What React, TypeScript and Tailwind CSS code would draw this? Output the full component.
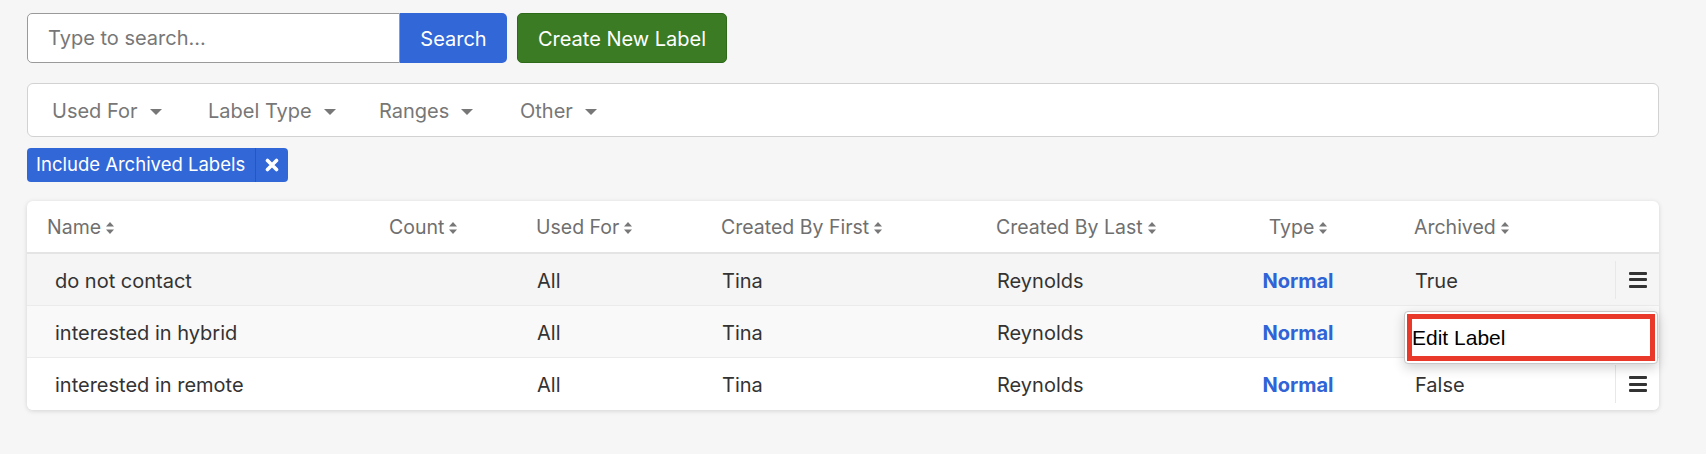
type Row = {
  name: string;
  usedFor: string;
  first: string;
  last: string;
  type: string;
  archived: string;
  bg: string;
};

const rows: Row[] = [
  { name: "do not contact", usedFor: "All", first: "Tina", last: "Reynolds", type: "Normal", archived: "True", bg: "bg-[#f5f5f5]" },
  { name: "interested in hybrid", usedFor: "All", first: "Tina", last: "Reynolds", type: "Normal", archived: "False", bg: "bg-[#f9f9f9]" },
  { name: "interested in remote", usedFor: "All", first: "Tina", last: "Reynolds", type: "Normal", archived: "False", bg: "bg-white" },
];

const cols = "grid grid-cols-[362px_147px_185px_275px_232px_140px_247px_44px]";

export default function App() {
  return (
    <div className="min-h-[454px] bg-[#f6f6f6] pl-[27px] pr-[47px] pt-[13px] font-['Inter',sans-serif] text-[20px] text-[#333]">
      {/* Search + create */}
      <div className="flex items-center gap-[10px]">
        <div className="flex h-[50px]">
          <input
            type="text"
            placeholder="Type to search..."
            className="h-full w-[373px] rounded-l-[5px] border border-[#9a9a9a] bg-white pl-[20px] text-[20px] text-[#333] placeholder:text-[#777] focus:outline-none"
          />
          <button className="h-full w-[107px] rounded-r-[5px] bg-[#3267d7] pt-[1px] text-white">
            Search
          </button>
        </div>
        <button className="h-[50px] w-[210px] rounded-[5px] border border-[#2f6a1a] bg-[#3a7b23] pt-[1px] text-white">
          Create New Label
        </button>
      </div>

      {/* Filter bar */}
      <div className="mt-[20px] flex h-[54px] items-center rounded-[6px] border border-[#d2d2d2] bg-white pl-[24px] pt-[1px] text-[#777]">
        <FilterItem label="Used For" className="w-[156px]" />
        <FilterItem label="Label Type" className="w-[171px]" />
        <FilterItem label="Ranges" className="w-[141px]" />
        <FilterItem label="Other" />
      </div>

      {/* Active filter tag */}
      <div className="mt-[11px] flex h-[34px] w-[261px] items-stretch rounded-[4px] bg-[#3267d7] text-[18.5px] text-white">
        <span className="flex flex-1 items-center pl-[9px]">Include Archived Labels</span>
        <span className="flex w-[33px] items-center justify-center border-l border-[#2a56b5]">
          <svg width="14" height="14" viewBox="0 0 14 14">
            <path d="M2.5 2.5l9 9M11.5 2.5l-9 9" stroke="white" strokeWidth="3.6" strokeLinecap="round" />
          </svg>
        </span>
      </div>

      {/* Table */}
      <div className="relative mt-[19px] w-[1632px] rounded-[6px] bg-white shadow-[0_1px_5px_rgba(0,0,0,0.14)]">
        <div className={`${cols} h-[53px] items-center border-b-2 border-[#e4e4e4] pt-[3px] text-[19.5px] text-[#6f6f6f]`}>
          <HeaderCell label="Name" className="pl-[20px]" />
          <HeaderCell label="Count" />
          <HeaderCell label="Used For" />
          <HeaderCell label="Created By First" />
          <HeaderCell label="Created By Last" />
          <HeaderCell label="Type" className="justify-center" />
          <HeaderCell label="Archived" className="pl-[46px]" />
          <div />
        </div>
        {rows.map((r, i) => (
          <div
            key={r.name}
            className={`${cols} h-[52px] items-center ${r.bg} ${i < rows.length - 1 ? "border-b border-[#ebebeb]" : "rounded-b-[6px]"}`}
          >
            <div className="pl-[28px] pt-[2px]">{r.name}</div>
            <div />
            <div className="pl-[1px] pt-[2px]">{r.usedFor}</div>
            <div className="pl-[1px] pt-[2px]">{r.first}</div>
            <div className="pl-[1px] pt-[2px]">{r.last}</div>
            <div className="pt-[2px] text-center font-bold text-[#2f63d6]">{r.type}</div>
            <div className="pl-[47px] pt-[2px]">{r.archived}</div>
            <div className="flex h-[38px] items-center justify-center border-l border-[#e8e8e8]">
              <div className="flex flex-col gap-[3.5px]">
                <span className="block h-[3px] w-[18px] rounded-[1px] bg-[#333]" />
                <span className="block h-[3px] w-[18px] rounded-[1px] bg-[#333]" />
                <span className="block h-[3px] w-[18px] rounded-[1px] bg-[#333]" />
              </div>
            </div>
          </div>
        ))}

        {/* Row action menu */}
        <div className="absolute left-[1377px] top-[110px] h-[53px] w-[254px] rounded-[4px] border border-[#c8c8c8] bg-white p-[2px] shadow-[0_4px_12px_rgba(0,0,0,0.18)]">
          <div className="flex h-full items-center border-[5px] border-[#e8392b] pt-[1px] font-['Liberation_Sans',Arial,sans-serif] text-[21px] text-black">
            Edit Label
          </div>
        </div>
      </div>
    </div>
  );
}

function FilterItem({ label, className = "" }: { label: string; className?: string }) {
  return (
    <div className={`flex items-center gap-[12px] ${className}`}>
      <span>{label}</span>
      <svg width="12" height="6" viewBox="0 0 12 6" className="mt-[2px]">
        <path d="M0 0h12L6 6z" fill="#777" />
      </svg>
    </div>
  );
}

function HeaderCell({ label, className = "" }: { label: string; className?: string }) {
  return (
    <div className={`flex items-center gap-[5px] ${className}`}>
      <span>{label}</span>
      <svg width="8" height="14" viewBox="0 0 8 14">
        <path d="M0 5.5L4 1l4 4.5z" fill="#777" />
        <path d="M0 8.5L4 13l4-4.5z" fill="#777" />
      </svg>
    </div>
  );
}
